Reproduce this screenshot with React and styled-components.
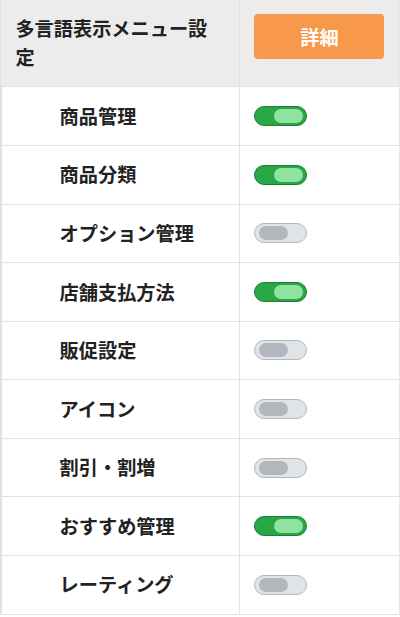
import React from 'react'
import styled, { createGlobalStyle } from 'styled-components'

const GlobalStyle = createGlobalStyle`
  html, body {
    margin: 0;
    padding: 0;
    background: #fff;
  }
  body {
    font-family: "Noto Sans CJK JP", "Noto Sans", sans-serif;
    color: #212529;
  }
`

const Table = styled.div`
  display: grid;
  grid-template-columns: 238px 1fr;
  width: 400px;
  box-sizing: border-box;
  border-left: 1px solid #dee2e6;
  border-right: 2px solid #e3e6ea;
`

const Cell = styled.div`
  box-sizing: border-box;
  padding: 14.4px 14.4px;
  border-bottom: 1px solid #dee2e6;
  background: ${(p) => (p.$head ? '#ececec' : '#fff')};
  display: flex;
  align-items: ${(p) => (p.$head ? 'flex-start' : 'center')};
  min-height: 57.6px;
  & + & {
    border-left: 1px solid #dee2e6;
  }
`

const HeadTitle = styled.div`
  font-size: 19.2px;
  line-height: 28.8px;
  font-weight: 700;
  color: #222;
`

const Label = styled.div`
  font-size: 19.2px;
  line-height: 28.8px;
  font-weight: 700;
  color: #222;
  padding-left: 43.2px;
`

const DetailButton = styled.button`
  width: 130px;
  height: 45px;
  border: none;
  border-radius: 4px;
  background: #f7984a;
  color: #fff;
  font-family: inherit;
  font-size: 19.2px;
  font-weight: 700;
  cursor: pointer;
`

const Track = styled.span`
  position: relative;
  display: inline-block;
  box-sizing: border-box;
  width: 53px;
  height: 20px;
  border-radius: 10px;
  border: 1px solid ${(p) => (p.$on ? '#1e7d34' : '#b3b8bd')};
  background: ${(p) => (p.$on ? '#28a745' : '#e1e4e7')};
`

const Knob = styled.span`
  position: absolute;
  top: 2px;
  left: ${(p) => (p.$on ? '19px' : '4px')};
  width: 29px;
  height: 14px;
  border-radius: 7px;
  background: ${(p) => (p.$on ? '#8fe3a2' : '#b1b7bd')};
`

const Toggle = ({ on }) => (
  <Track $on={on}>
    <Knob $on={on} />
  </Track>
)

const items = [
  { name: '商品管理', on: true },
  { name: '商品分類', on: true },
  { name: 'オプション管理', on: false },
  { name: '店舗支払方法', on: true },
  { name: '販促設定', on: false },
  { name: 'アイコン', on: false },
  { name: '割引・割増', on: false },
  { name: 'おすすめ管理', on: true },
  { name: 'レーティング', on: false },
]

export default function App() {
  return (
    <>
      <GlobalStyle />
      <Table>
        <Cell $head>
          <HeadTitle>多言語表示メニュー設定</HeadTitle>
        </Cell>
        <Cell $head>
          <DetailButton>詳細</DetailButton>
        </Cell>
        {items.map((item) => (
          <React.Fragment key={item.name}>
            <Cell>
              <Label>{item.name}</Label>
            </Cell>
            <Cell>
              <Toggle on={item.on} />
            </Cell>
          </React.Fragment>
        ))}
      </Table>
    </>
  )
}
